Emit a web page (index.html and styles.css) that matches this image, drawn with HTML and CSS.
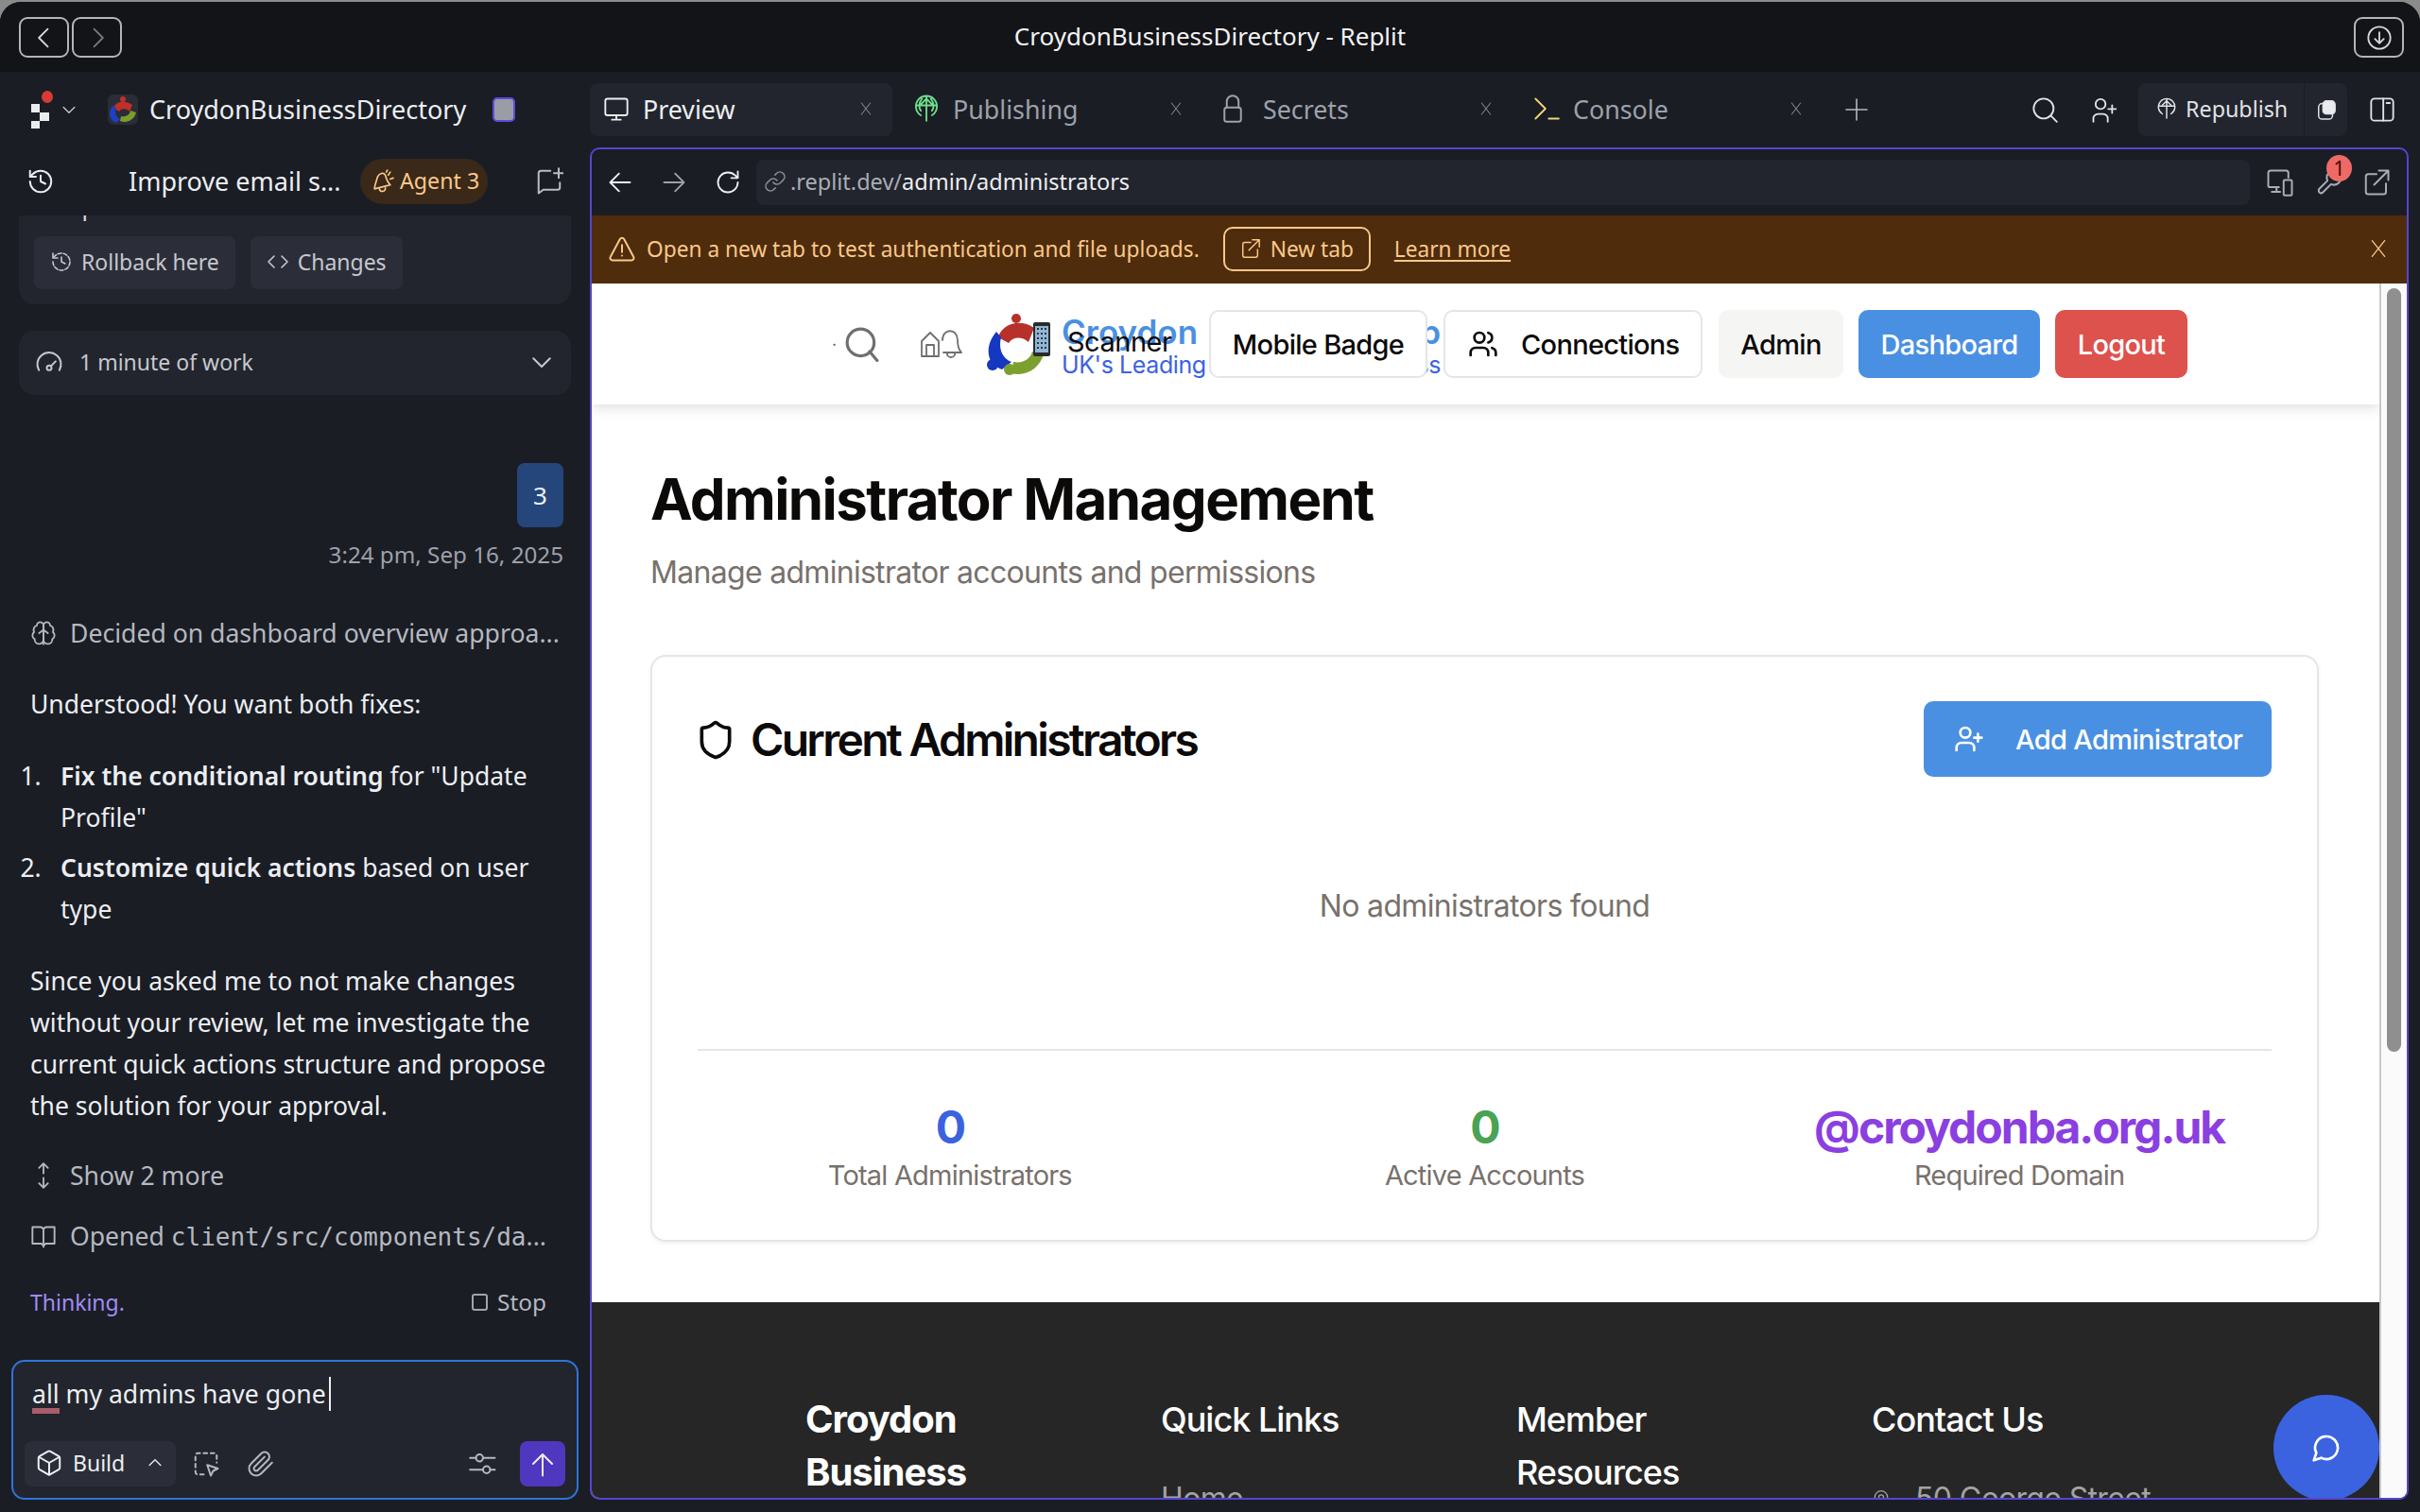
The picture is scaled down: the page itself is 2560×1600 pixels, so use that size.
FILE: index.html
```html
<!DOCTYPE html>
<html lang="en">
<head>
  <title>CroydonBusinessDirectory - Replit</title>
  <meta charset="utf-8">
  <link rel="stylesheet" href="styles.css">
</head>
<body>
<div class="window">

  <div class="titlebar">
    <div class="nav-btns">
      <div class="tb-btn"><svg class="ic-tb" viewBox="0 0 24 24"><path d="M15 4 7 12l8 8"/></svg></div>
      <div class="tb-btn dim"><svg class="ic-tb" viewBox="0 0 24 24"><path d="m9 4 8 8-8 8"/></svg></div>
    </div>
    <div class="win-title">CroydonBusinessDirectory - Replit</div>
    <div class="tb-btn"><svg class="ic-tb" viewBox="0 0 24 24"><circle cx="12" cy="12" r="10"/><path d="M12 7v10M8 13l4 4 4-4"/></svg></div>
  </div>

  <div class="workspace">

    <!-- left: agent chat -->
    <div class="left">
      <div class="project-bar">
        <div class="rep-logo">
          <span class="rep-dot"></span>
          <svg class="rep-mark" viewBox="0 0 20 30"><path d="M0 4h9v9H0zM9 13h10v9H9zM0 22h9v9H0z" fill="#e9ebef"/></svg>
        </div>
        <svg class="ic-sm chev" viewBox="0 0 24 24"><path d="m5 9 7 7 7-7"/></svg>
        <div class="proj-icon">
          <svg viewBox="0 0 32 32"><circle cx="16" cy="5" r="3" fill="#c03028"/><path d="M6 14c2-6 11-9 20-3l-3 7c-3-3-8-4-11 0z" fill="#c03028"/><path d="M5 12C0 19 1 27 9 30l4-4c-4-2-6-7-4-12z" fill="#1d3fc0"/><path d="M13 28c7 3 15-1 17-9l-6-2c-1 5-5 7-10 6z" fill="#7a9d2c"/></svg>
        </div>
        <div class="proj-name">CroydonBusinessDirectory</div>
        <div class="proj-chip"></div>
      </div>

      <div class="chat-head">
        <svg class="ic-md" viewBox="0 0 24 24"><path d="M3 12a9 9 0 1 0 9-9 9.75 9.75 0 0 0-6.74 2.74L3 8"/><path d="M3 3v5h5M12 7v5l4 2"/></svg>
        <div class="chat-title">Improve email s...</div>
        <div class="agent-pill">
          <svg class="ic-pill" viewBox="0 0 24 24"><path d="M7 8c2-4 6-5 8-2 1 4 3 8 5 10L4 20c0-3 2-8 3-12z"/><path d="M9 20a3 3 0 0 0 6-1M18 6l2-3M20 10l3-1M16 3l1-2"/></svg>
          Agent 3
        </div>
        <svg class="ic-md new-chat" viewBox="0 0 24 24"><path d="M13 3H5a2 2 0 0 0-2 2v17l4-3h12a2 2 0 0 0 2-2v-4"/><path d="M20 1v8M16 5h8"/></svg>
      </div>

      <div class="chat">
        <div class="checkpoint">
          <div class="cut-text">complete.</div>
          <div class="cp-btns">
            <div class="cp-btn"><svg class="ic-btn" viewBox="0 0 24 24"><path d="M3 12a9 9 0 1 0 9-9 9.75 9.75 0 0 0-6.74 2.74L3 8" stroke-dasharray="4 2"/><path d="M3 3v5h5M12 7v5l4 2"/></svg>Rollback here</div>
            <div class="cp-btn"><svg class="ic-btn" viewBox="0 0 24 24"><path d="m16 18 6-6-6-6M8 6l-6 6 6 6"/></svg>Changes</div>
          </div>
        </div>

        <div class="work-row">
          <svg class="ic-md" viewBox="0 0 24 24"><circle cx="12" cy="17" r="2"/><path d="m13.5 15.5 4-4M3.34 19a10 10 0 1 1 17.32 0"/></svg>
          <span class="work-text">1 minute of work</span>
          <svg class="ic-md work-chev" viewBox="0 0 24 24"><path d="m5 9 7 7 7-7"/></svg>
        </div>

        <div class="user-msg"><div class="bubble">3</div></div>
        <div class="msg-time">3:24 pm, Sep 16, 2025</div>

        <div class="step step-first">
          <svg class="ic-step" viewBox="0 0 24 24"><path d="M12 5a3 3 0 1 0-6 .1 4 4 0 0 0-2.5 5.8 4 4 0 0 0 .5 6.6A4 4 0 1 0 12 18Z"/><path d="M12 5a3 3 0 1 1 6 .1 4 4 0 0 1 2.500 5.800 4 4 0 0 1-.5 6.600A4 4 0 1 1 12 18Z"/><path d="M12 8v14M8 12l4-3 4 3"/></svg>
          <span>Decided on dashboard overview approa...</span>
        </div>

        <p class="msg msg-first">Understood! You want both fixes:</p>
        <ol class="msg-list">
          <li><b>Fix the conditional routing</b> for "Update Profile"</li>
          <li><b>Customize quick actions</b> based on user type</li>
        </ol>
        <p class="msg">Since you asked me to not make changes without your review, let me investigate the current quick actions structure and propose the solution for your approval.</p>

        <div class="step step-more">
          <svg class="ic-step" viewBox="0 0 24 24"><path d="M12 1v9M8 5l4-4 4 4M12 14v9M8 19l4 4 4-4"/></svg>
          <span>Show 2 more</span>
        </div>
        <div class="step step-open">
          <svg class="ic-step" viewBox="0 0 24 24"><path d="M12 4v17M2 3h7a3 3 0 0 1 3 3 3 3 0 0 1 3-3h7v15h-8l-2 2-2-2H2z"/></svg>
          <span>Opened <code>client/src/components/da</code>...</span>
        </div>

        <div class="status-row">
          <span class="thinking">Thinking.</span>
          <span class="stop"><span class="stop-box"></span>Stop</span>
        </div>
      </div>

      <div class="composer">
        <div class="composer-text"><span class="misspelt">all</span> my admins have gone<span class="caret"></span></div>
        <div class="composer-tools">
          <div class="build-btn">
            <svg class="ic-build" viewBox="0 0 24 24"><path d="M21 8a2 2 0 0 0-1-1.730l-7-4a2 2 0 0 0-2 0l-7 4A2 2 0 0 0 3 8v8a2 2 0 0 0 1 1.730l7 4a2 2 0 0 0 2 0l7-4A2 2 0 0 0 21 16Z"/><path d="m3.300 7 8.700 5 8.700-5M12 22V12"/></svg>
            <span>Build</span>
            <svg class="ic-sm build-chev" viewBox="0 0 24 24"><path d="m5 15 7-7 7 7"/></svg>
          </div>
          <svg class="ic-tool" viewBox="0 0 24 24"><path d="M10 21H5a2 2 0 0 1-2-2V5a2 2 0 0 1 2-2h14a2 2 0 0 1 2 2v6" stroke-dasharray="3 3"/><path d="m13 13 9 3-4 2-2 4z"/></svg>
          <svg class="ic-tool clip" viewBox="0 0 24 24"><path d="m21.440 11.050-9.190 9.190a6 6 0 0 1-8.490-8.490l8.570-8.570A4 4 0 1 1 18 8.840l-8.590 8.570a2 2 0 0 1-2.830-2.830l8.490-8.480"/></svg>
          <svg class="ic-tool tool-right" viewBox="0 0 24 24"><circle cx="9" cy="7" r="3"/><circle cx="15" cy="17" r="3"/><path d="M12 7h10M1 7h5M1 17h11M18 17h4"/></svg>
          <div class="send-btn"><svg class="ic-md" viewBox="0 0 24 24"><path d="m4 12 8-8 8 8M12 4v18"/></svg></div>
        </div>
      </div>
    </div>

    <!-- right: tabs and preview -->
    <div class="right">
      <div class="tabs">
        <div class="tab active">
          <svg class="ic-tab" viewBox="0 0 24 24"><rect x="2" y="3" width="20" height="15" rx="2"/><path d="M8 22h8M12 18v4"/></svg>
          <span class="tab-name">Preview</span>
          <svg class="ic-x" viewBox="0 0 24 24"><path d="m5 3 14 18M19 3 5 21"/></svg>
        </div>
        <div class="tab">
          <svg class="ic-tab green" viewBox="0 0 24 24"><path d="M7 18a9.500 9.500 0 1 1 10 0M12 1v22M7 8l5-5 5 5M3 9h18M8 3c-3 4-3 8-1 11M16 3c3 4 3 8 1 11"/></svg>
          <span class="tab-name">Publishing</span>
          <svg class="ic-x" viewBox="0 0 24 24"><path d="m5 3 14 18M19 3 5 21"/></svg>
        </div>
        <div class="tab">
          <svg class="ic-tab lock" viewBox="0 0 16 24"><rect x="1" y="11" width="14" height="12" rx="2"/><path d="M3 11V6a5 5 0 0 1 10 0v5"/></svg>
          <span class="tab-name">Secrets</span>
          <svg class="ic-x" viewBox="0 0 24 24"><path d="m5 3 14 18M19 3 5 21"/></svg>
        </div>
        <div class="tab">
          <svg class="ic-tab yellow" viewBox="0 0 24 24"><path d="m2 3 9 9-9 9"/><path class="under" d="M14 21h9"/></svg>
          <span class="tab-name">Console</span>
          <svg class="ic-x" viewBox="0 0 24 24"><path d="m5 3 14 18M19 3 5 21"/></svg>
        </div>
        <svg class="ic-plus" viewBox="0 0 24 24"><path d="M12 1v22M1 12h22"/></svg>
        <div class="tabs-right">
          <svg class="ic-head" viewBox="0 0 24 24"><circle cx="11" cy="11" r="9"/><path d="m23 23-5.500-5.500"/></svg>
          <svg class="ic-head" viewBox="0 0 24 24"><path d="M3 23v-4a5 5 0 0 1 5-3h3a5 5 0 0 1 5 3v4"/><circle cx="9.500" cy="7" r="4.500"/><path d="M20 8v7M16.500 11.500h7"/></svg>
          <div class="republish">
            <div class="rep-main">
              <svg class="ic-rep" viewBox="0 0 24 24"><path d="M7 18a9.500 9.500 0 1 1 10 0M12 1v22M7 8l5-5 5 5M3 9h18"/></svg>
              Republish
            </div>
            <div class="rep-side"><svg class="ic-rep-side" viewBox="0 0 24 24"><rect x="3" y="5" width="16" height="18" rx="4"/><rect x="8" y="2" width="14" height="15" rx="4" fill="#e9ebef"/></svg></div>
          </div>
          <svg class="ic-panel" viewBox="0 0 24 24"><rect x="2" y="2" width="20" height="20" rx="3"/><path d="M13 2v20M16 6h3"/></svg>
        </div>
      </div>

      <div class="preview">
        <div class="url-row">
          <svg class="ic-url" viewBox="0 0 24 24"><path d="M21 12H3M11 20l-8-8 8-8"/></svg>
          <svg class="ic-url fwd" viewBox="0 0 24 24"><path d="M3 12h18M13 4l8 8-8 8"/></svg>
          <svg class="ic-url" viewBox="0 0 24 24"><path d="M21 12a9 9 0 1 1-9-9c2.520 0 4.930 1 6.740 2.740L21 8M21 2v6h-6"/></svg>
          <div class="url-box">
            <svg class="ic-link" viewBox="0 0 24 24"><path d="M10 13a5 5 0 0 0 7.540.540l3-3a5 5 0 0 0-7.070-7.070l-1.720 1.710"/><path d="M14 11a5 5 0 0 0-7.540-.540l-3 3a5 5 0 0 0 7.070 7.070l1.710-1.710"/></svg>
            <span class="url-host">.replit.dev/</span><span class="url-path">admin/administrators</span>
          </div>
          <svg class="ic-url-r" viewBox="0 0 24 24"><path d="M11 16H3a1 1 0 0 1-1-1V4a2 2 0 0 1 2-2h13a2 2 0 0 1 2 2v4M9 16v4M5 20h7"/><rect x="15" y="10" width="7" height="13" rx="1"/></svg>
          <div class="devtools">
            <svg class="ic-url-r" viewBox="0 0 24 24"><path d="M14.700 6.300a1 1 0 0 0 0 1.400l1.600 1.600a1 1 0 0 0 1.400 0l3.770-3.770a6 6 0 0 1-7.940 7.940l-6.910 6.910a2.120 2.120 0 0 1-3-3l6.910-6.910a6 6 0 0 1 7.940-7.940z"/></svg>
            <span class="dev-badge">1</span>
          </div>
          <svg class="ic-url-r" viewBox="0 0 24 24"><path d="M14 2h8v8M10 14 22 2M20 13v7a2 2 0 0 1-2 2H5a2 2 0 0 1-2-2V7a2 2 0 0 1 2-2h7"/></svg>
        </div>

        <div class="banner">
          <svg class="ic-warn" viewBox="0 0 24 24"><path d="M21.730 19l-8-15a2 2 0 0 0-3.480 0l-8 15A2 2 0 0 0 4 22h16a2 2 0 0 0 1.730-3M12 9v6M12 18h.01"/></svg>
          <span class="banner-text">Open a new tab to test authentication and file uploads.</span>
          <div class="newtab-btn"><svg class="ic-newtab" viewBox="0 0 24 24"><path d="M14 2h8v8M10 14 22 2M20 13v7a2 2 0 0 1-2 2H5a2 2 0 0 1-2-2V7a2 2 0 0 1 2-2h7"/></svg>New tab</div>
          <span class="learn">Learn more</span>
          <svg class="ic-close" viewBox="0 0 24 24"><path d="m4 2 16 20M20 2 4 22"/></svg>
        </div>

        <div class="site">
          <div class="page">
            <div class="site-nav">
              <span class="nav-dot">·</span>
              <svg class="nav-search" viewBox="0 0 24 24"><circle cx="11" cy="11" r="9"/><path d="m22 23-5-6"/></svg>
              <svg class="nav-home" viewBox="0 0 44 30"><path d="M1 28V12l9-9 9 9v16zM6 28V16h8v12M23 11c0-13 16-13 16 0 0 7 2 11 4 13H24M28 24v2a4 3 0 0 0 8 0v-2"/></svg>
              <div class="brand">
                <svg class="brand-logo" viewBox="0 0 68 66"><circle cx="31" cy="6" r="5" fill="#b8302a"/><path d="M12 26c4-15 24-20 38-10l-6 15c-7-6-16-6-21 1z" fill="#b8302a"/><path d="M10 20C-2 34-2 54 16 60l10-8c-10-4-14-14-11-26z" fill="#1637c0"/><circle cx="6" cy="55" r="6" fill="#1637c0"/><path d="M26 64c16 4 30-6 34-20l-12-3c-2 8-10 13-20 11z" fill="#7ca02f"/><circle cx="24" cy="60" r="6" fill="#7ca02f"/></svg>
                <svg class="brand-phone" viewBox="0 0 18 36"><rect width="18" height="36" rx="2" fill="#2a2a2a"/><rect x="2" y="4" width="14" height="28" fill="#8fb6d8"/><path d="M4 6h2v2H4zM8 6h2v2H8zM12 6h2v2h-2zM4 11h2v2H4zM8 11h2v2H8zM12 11h2v2h-2zM4 16h2v2H4zM8 16h2v2H8zM12 16h2v2h-2zM4 21h2v2H4zM8 21h2v2H8zM12 21h2v2h-2zM4 26h2v2H4zM8 26h2v2H8zM12 26h2v2h-2z" fill="#333"/></svg>
                <div class="brand-text">
                  <div class="brand-line brand-top"><span>Croydon</span><span>Group</span></div>
                  <div class="brand-line brand-sub"><span>UK's Leading</span><span>Business</span></div>
                  <span class="scanner">Scanner</span>
                </div>
              </div>
              <div class="nav-btn outline first">Mobile Badge</div>
              <div class="nav-btn outline conn">
                <svg class="ic-users" viewBox="0 0 24 24"><path d="M16 21v-2a4 4 0 0 0-4-4H6a4 4 0 0 0-4 4v2"/><circle cx="9" cy="7" r="4"/><path d="M22 21v-2a4 4 0 0 0-3-3.870M16 3.130a4 4 0 0 1 0 7.750"/></svg>
                Connections
              </div>
              <div class="nav-btn grey">Admin</div>
              <div class="nav-btn blue">Dashboard</div>
              <div class="nav-btn red">Logout</div>
            </div>

            <div class="content">
              <h1>Administrator Management</h1>
              <p class="lead">Manage administrator accounts and permissions</p>

              <div class="card">
                <div class="card-head">
                  <div class="card-title">
                    <svg class="ic-shield" viewBox="0 0 24 24"><path d="M20 13c0 5-3.500 7.500-7.660 8.950a1 1 0 0 1-.67-.01C7.500 20.500 4 18 4 13V6a1 1 0 0 1 1-1c2 0 4.500-1.200 6.240-2.720a1.170 1.170 0 0 1 1.520 0C14.510 3.810 17 5 19 5a1 1 0 0 1 1 1z"/></svg>
                    <h2>Current Administrators</h2>
                  </div>
                  <div class="add-btn">
                    <svg class="ic-add" viewBox="0 0 24 24"><path d="M16 21v-2a4 4 0 0 0-4-4H6a4 4 0 0 0-4 4v2"/><circle cx="9" cy="7" r="4"/><path d="M19 8v6M22 11h-6"/></svg>
                    Add Administrator
                  </div>
                </div>
                <div class="empty">No administrators found</div>
                <div class="stats">
                  <div class="stat"><div class="stat-num c-blue">0</div><div class="stat-label">Total Administrators</div></div>
                  <div class="stat"><div class="stat-num c-green">0</div><div class="stat-label">Active Accounts</div></div>
                  <div class="stat"><div class="stat-num c-purple">@croydonba.org.uk</div><div class="stat-label">Required Domain</div></div>
                </div>
              </div>
            </div>

            <div class="footer">
              <div class="foot-col"><div class="foot-brand">Croydon Business</div></div>
              <div class="foot-col"><div class="foot-head">Quick Links</div><div class="foot-link">Home</div></div>
              <div class="foot-col"><div class="foot-head">Member Resources</div></div>
              <div class="foot-col">
                <div class="foot-head">Contact Us</div>
                <div class="foot-link foot-addr"><svg class="ic-pin" viewBox="0 0 24 24"><path d="M20 10c0 6-8 12-8 12s-8-6-8-12a8 8 0 0 1 16 0z"/><circle cx="12" cy="10" r="3"/></svg>50 George Street</div>
              </div>
            </div>
          </div>
          <div class="scrollbar"><div class="thumb"></div></div>
          <div class="chat-fab"><svg class="ic-fab" viewBox="0 0 24 24"><path d="M7.900 20A9 9 0 1 0 4 16.100L2 22Z"/></svg></div>
        </div>
      </div>
    </div>
  </div>
</div>
</body>
</html>
```

FILE: styles.css
```css
* { box-sizing: border-box; }

body {
  margin: 0;
  width: 2560px;
  height: 1600px;
  overflow: hidden;
  background: #8b8b8b;
  font-family: "Noto Sans", sans-serif;
  color: #e9ebef;
}

svg { fill: none; stroke: currentColor; stroke-width: 1.6; stroke-linecap: round; stroke-linejoin: round; flex: none; }

.window {
  margin-top: 2px;
  height: 1598px;
  border-radius: 22px 22px 0 0;
  overflow: hidden;
  background: #1a1d24;
  display: flex;
  flex-direction: column;
}

/* title bar */
.titlebar {
  height: 74px;
  background: #131418;
  display: flex;
  align-items: center;
  justify-content: space-between;
  padding: 0 17px 0 20px;
  position: relative;
}
.nav-btns { display: flex; gap: 3px; }
.tb-btn {
  width: 53px;
  height: 43px;
  border: 2px solid #b4b5b8;
  border-radius: 9px;
  display: flex;
  align-items: center;
  justify-content: center;
  margin-top: 1px;
  color: #d6d7da;
}
.tb-btn.dim { color: #77787c; }
.ic-tb { width: 28px; height: 28px; }
.win-title {
  position: absolute;
  left: 0;
  right: 0;
  top: 18px;
  text-align: center;
  font-size: 26px;
  color: #f2f2f3;
}

.workspace { flex: 1; display: flex; min-height: 0; }

/* left column */
.left { width: 624px; flex: none; display: flex; flex-direction: column; }

.project-bar { height: 80px; display: flex; align-items: center; padding-left: 33px; }
.rep-logo { position: relative; width: 22px; height: 36px; margin-top: 2px; }
.rep-mark { width: 20px; height: 30px; stroke: none; position: absolute; top: 7px; left: 0; }
.rep-dot { position: absolute; top: -3px; left: 11px; width: 12px; height: 13px; background: #d93a36; border-radius: 50%; }
.ic-sm { width: 20px; height: 20px; }
.chev { margin-left: 8px; color: #c8cad0; }
.proj-icon { width: 32px; height: 32px; margin-left: 31px; background: #2a2d35; border-radius: 6px; overflow: hidden; }
.proj-icon svg { width: 32px; height: 32px; stroke: none; }
.proj-name { margin-left: 12px; font-size: 27px; color: #eceef2; padding-bottom: 2px; }
.proj-chip { width: 24px; height: 26px; margin-left: 28px; background: #9a9da6; border: 2px solid #5c4be0; border-radius: 5px; }

.chat-head { height: 72px; display: flex; align-items: center; padding-left: 28px; position: relative; }
.ic-md { width: 30px; height: 30px; }
.chat-title { margin-left: 78px; font-size: 27px; color: #eceef2; width: 245px; padding-bottom: 2px; white-space: nowrap; }
.agent-pill {
  width: 135px;
  height: 48px;
  border-radius: 24px;
  background: #3a2818;
  color: #f8c88a;
  font-size: 23.2px;
  display: flex;
  align-items: center;
  gap: 6px;
  padding: 0 0 2px 11px;
}
.ic-pill { width: 25px; height: 25px; }
.new-chat { margin-left: 50px; color: #b9bcc4; }

.chat { flex: 1; min-height: 0; overflow: hidden; padding: 0 20px; }
.checkpoint {
  height: 94px;
  background: #22252d;
  border-radius: 0 0 16px 16px;
  padding: 0 16px;
  overflow: hidden;
}
.cut-text { height: 22px; margin-top: -21px; font-size: 25px; line-height: 22px; color: #d8dae0; }
.cp-btns { display: flex; gap: 16px; margin-top: 21px; }
.cp-btn {
  height: 56px;
  padding: 0 17px 2px;
  background: #2b2e38;
  border-radius: 8px;
  display: flex;
  align-items: center;
  gap: 9px;
  font-size: 23px;
  color: #c5c8cf;
}
.ic-btn { width: 24px; height: 24px; }

.work-row {
  height: 68px;
  margin-top: 28px;
  background: #22252d;
  border-radius: 16px;
  display: flex;
  align-items: center;
  padding: 0 16px 2px 17px;
  color: #c5c8cf;
  font-size: 23px;
}
.work-text { margin-left: 17px; }
.work-chev { margin-left: auto; }

.user-msg { display: flex; justify-content: flex-end; margin-top: 72px; padding-right: 8px; }
.bubble {
  width: 49px;
  height: 68px;
  background: #25467a;
  border-radius: 8px;
  display: flex;
  align-items: center;
  justify-content: center;
  font-size: 26px;
  color: #f0f2f6;
}
.msg-time { text-align: right; padding-right: 8px; margin-top: 12px; font-size: 24.2px; line-height: 34px; color: #9da1aa; }

.step { display: flex; align-items: center; gap: 14px; padding-left: 12px; font-size: 26.6px; line-height: 40px; color: #b4b8c0; white-space: nowrap; }
.ic-step { width: 28px; height: 30px; color: #b4b8c0; }
.step-first { margin-top: 46px; }
.step-more { margin-top: 32px; }
.step-open { margin-top: 24px; }
.step code { font-family: "DejaVu Sans Mono", monospace; font-size: 26px; }

.msg { margin: 0; padding-left: 12px; font-size: 26.5px; line-height: 44px; color: #eceef2; }
.msg-first { margin-top: 33px; }
.msg-list { margin: 32px 0 32px; padding: 0 0 0 44px; font-size: 26.5px; line-height: 44px; color: #eceef2; }
.msg-list li { margin-bottom: 9px; }
.msg-list li::marker { content: counter(list-item) ".\2002\2006\200A"; }
.msg-list b { font-weight: 600; }

.status-row { display: flex; justify-content: space-between; padding: 0 26px 0 12px; margin-top: 32px; font-size: 23px; line-height: 34px; }
.thinking { color: #a08cf5; }
.stop { color: #b4b8c0; display: flex; align-items: center; gap: 10px; font-size: 24.4px; }
.stop-box { width: 17px; height: 18px; border: 2px solid #a0a4ac; border-radius: 3px; }

.composer {
  height: 148px;
  margin: 0 12px 13px;
  background: #22252d;
  border: 2px solid #2f74d8;
  border-radius: 14px;
  padding: 0 12px;
}
.composer-text { height: 60px; padding: 15px 0 0 8px; font-size: 26.6px; line-height: 38px; color: #eceef2; white-space: nowrap; }
.misspelt { border-bottom: 6px solid #a85e6a; display: inline-block; line-height: 30px; }
.caret { display: inline-block; width: 2px; height: 36px; background: #eceef2; margin-left: 3px; vertical-align: -8px; }
.composer-tools { display: flex; align-items: center; margin-top: 24px; }
.build-btn {
  width: 160px;
  height: 48px;
  background: #2b2e38;
  border-radius: 8px;
  display: flex;
  align-items: center;
  padding: 0 0 2px 11px;
  font-size: 23px;
  color: #eceef2;
}
.ic-build { width: 30px; height: 34px; }
.build-btn span { margin-left: 10px; }
.build-chev { margin-left: auto; margin-right: 12px; }
.ic-tool { width: 30px; height: 34px; color: #b4b8c0; margin-left: 17px; }
.clip { margin-left: 28px; }
.tool-right { margin-left: auto; margin-right: 24px; }
.send-btn {
  width: 48px;
  height: 48px;
  background: #4f37c0;
  border-radius: 8px;
  display: flex;
  align-items: center;
  justify-content: center;
  color: #eceef2;
}

/* right column */
.right { flex: 1; min-width: 0; display: flex; flex-direction: column; padding-right: 12px; padding-bottom: 13px; }

.tabs { height: 80px; display: flex; align-items: center; gap: 8px; flex: none; }
.tab {
  width: 320px;
  height: 56px;
  display: flex;
  align-items: center;
  padding: 0 20px 2px 14px;
  border-radius: 8px;
  color: #9da1aa;
  font-size: 26.8px;
}
.tab.active { background: #22252d; color: #eceef2; }
.ic-tab { width: 28px; height: 30px; }
.lock { width: 20px; height: 30px; margin-right: 8px; }
.tab-name { margin-left: 14px; }
.green { color: #6fdc8c; }
.yellow { color: #f2d675; }
.under { color: #f2d675; }
.ic-x { width: 16px; height: 18px; margin-left: auto; color: #7f838c; }
.ic-plus { width: 24px; height: 24px; color: #b4b8c0; margin-left: 16px; }
.tabs-right { margin-left: auto; display: flex; align-items: center; color: #e0e2e7; }
.ic-head { width: 28px; height: 28px; margin-right: 34px; }
.republish {
  width: 221px;
  height: 56px;
  margin-left: -11px;
  background: #22252d;
  border-radius: 8px;
  display: flex;
}
.rep-main {
  width: 176px;
  display: flex;
  align-items: center;
  gap: 9px;
  padding: 0 0 2px 19px;
  font-size: 23.3px;
  border-right: 1px solid #1a1d24;
}
.ic-rep { width: 22px; height: 28px; }
.rep-side { flex: 1; display: flex; align-items: center; justify-content: center; }
.ic-rep-side { width: 22px; height: 24px; }
.ic-panel { width: 28px; height: 28px; margin-left: 23px; margin-right: 14px; }

.preview {
  flex: 1;
  min-height: 0;
  border: 2px solid #5645cf;
  border-radius: 10px;
  overflow: hidden;
  display: flex;
  flex-direction: column;
}
.url-row { height: 70px; flex: none; display: flex; align-items: center; padding: 0 12px 0 16px; color: #eceef2; }
.ic-url { width: 28px; height: 28px; margin-right: 29px; }
.ic-url:nth-of-type(3) { margin-right: 0; }
.fwd { color: #9da1aa; }
.url-box {
  width: 1580px;
  height: 48px;
  margin-left: 16px;
  margin-right: 17px;
  background: #22252d;
  border-radius: 8px;
  display: flex;
  align-items: center;
  padding: 0 0 2px 8px;
  font-size: 23.5px;
}
.ic-link { width: 24px; height: 24px; color: #8b8f98; margin-right: 4px; }
.url-host { color: #a9adb5; }
.url-path { color: #eceef2; }
.ic-url-r { width: 30px; height: 30px; color: #a9adb5; }
.devtools { position: relative; margin: 0 22px; width: 28px; height: 30px; }
.dev-badge {
  position: absolute;
  top: -14px;
  left: 12px;
  width: 27px;
  height: 28px;
  border-radius: 50%;
  background: #ee6a66;
  color: #4a0808;
  font-size: 21px;
  line-height: 28px;
  text-align: center;
}

.banner { height: 72px; flex: none; background: #4f2c0c; color: #f8c88a; display: flex; align-items: center; padding: 0 0 2px 16px; font-size: 22.7px; }
.ic-warn { width: 32px; height: 30px; }
.banner-text { margin-left: 10px; }
.newtab-btn {
  height: 47px;
  width: 156px;
  margin-left: 25px;
  border: 2px solid #f8c88a;
  border-radius: 10px;
  display: flex;
  align-items: center;
  justify-content: center;
  gap: 10px;
}
.ic-newtab { width: 22px; height: 24px; }
.learn { margin-left: 25px; text-decoration: underline; text-underline-offset: 3px; }
.ic-close { width: 20px; height: 20px; margin-left: auto; margin-right: 20px; }

/* the site inside the preview */
.site { flex: 1; min-height: 0; display: flex; background: #fff; position: relative; font-family: Inter, sans-serif; }
.page { flex: 1; min-width: 0; overflow: hidden; }
.scrollbar { width: 29px; flex: none; background: #fafafa; border-left: 2px solid #c8c8c8; padding: 5px 6px 0 6px; }
.thumb { height: 808px; background: #8f8f8f; border-radius: 8px; }

.site-nav {
  height: 128px;
  background: #fff;
  display: flex;
  align-items: center;
  padding-left: 254px;
  box-shadow: 0 4px 12px rgba(0, 0, 0, 0.12);
  position: relative;
}
.nav-dot { color: #666; font-size: 18px; width: 12px; }
.nav-search { width: 38px; height: 38px; color: #6f6f6f; margin-left: 1px; stroke-width: 2; }
.nav-home { width: 44px; height: 30px; margin-left: 43px; color: #6f6f6f; stroke-width: 1.8; }
.brand { display: flex; align-items: center; margin-left: 26px; position: relative; }
.brand-logo { width: 68px; height: 66px; stroke: none; }
.brand-phone { position: absolute; left: 49px; top: 15px; width: 18px; height: 36px; stroke: none; }
.brand-text { width: 401px; margin-left: 11px; position: relative; padding-top: 6px; }
.brand-line { display: flex; justify-content: space-between; white-space: nowrap; }
.brand-top { font-size: 35px; font-weight: 600; line-height: 38px; color: #4a90e2; }
.brand-sub { font-size: 25px; line-height: 32px; color: #3b63e0; letter-spacing: -0.4px; }
.scanner { position: absolute; left: 6px; top: 19px; font-size: 29px; line-height: 34px; color: #0a0a0a; letter-spacing: -0.5px; }

.nav-btn {
  height: 72px;
  display: flex;
  align-items: center;
  border-radius: 10px;
  font-size: 29px;
  font-weight: 500;
  letter-spacing: -0.7px;
  padding: 0 24px;
  white-space: nowrap;
  position: relative;
  color: #0c0a09;
}
.outline { background: #fff; border: 2px solid #e5e5e5; }
.first { margin-left: -245px; width: 231px; justify-content: center; }
.conn { margin-left: 17px; width: 274px; gap: 24px; }
.grey { background: #f5f5f4; margin-left: 17px; width: 132px; justify-content: center; }
.blue { background: #4a90e2; color: #fff; margin-left: 16px; width: 192px; justify-content: center; }
.red { background: #dd524d; color: #fff; margin-left: 16px; width: 140px; justify-content: center; }
.ic-users { width: 32px; height: 32px; color: #0c0a09; stroke-width: 2; }

.content { padding: 63px 64px 64px 62px; }
h1 { margin: 0; font-size: 60px; line-height: 74px; font-weight: 700; color: #0c0a09; letter-spacing: -1.6px; }
.lead { margin: 19px 0 0; font-size: 32px; line-height: 44px; color: #78716c; letter-spacing: -0.7px; }

.card {
  margin-top: 65px;
  height: 621px;
  border: 2px solid #e5e5e5;
  border-radius: 16px;
  box-shadow: 0 2px 4px rgba(0, 0, 0, 0.06);
  padding: 47px 48px 0 48px;
}
.card-head { display: flex; justify-content: space-between; align-items: center; height: 80px; }
.card-title { display: flex; align-items: center; gap: 15px; padding-top: 2px; }
.ic-shield { width: 44px; height: 44px; margin-left: -3px; color: #0c0a09; stroke-width: 2; }
h2 { margin: 0; font-size: 48px; font-weight: 600; line-height: 60px; color: #0c0a09; letter-spacing: -2.7px; }
.add-btn {
  width: 368px;
  height: 80px;
  background: #4a90e2;
  border-radius: 10px;
  color: #fff;
  font-size: 29px;
  font-weight: 500;
  letter-spacing: -0.65px;
  display: flex;
  align-items: center;
  padding-left: 32px;
  gap: 33px;
}
.ic-add { width: 32px; height: 32px; stroke-width: 2; }
.empty { margin-top: 115px; text-align: center; font-size: 32px; line-height: 44px; color: #78716c; height: 173px; letter-spacing: -0.65px; }
.stats {
  border-top: 2px solid #e5e5e5;
  padding-top: 49px;
  display: grid;
  grid-template-columns: repeat(3, 1fr);
  column-gap: 32px;
  text-align: center;
}
.stat-num { font-size: 48px; line-height: 64px; font-weight: 700; letter-spacing: -2px; white-space: nowrap; }
.stat-label { font-size: 29px; line-height: 40px; color: #78716c; margin-top: -1px; letter-spacing: -0.8px; }
.c-blue { color: #3b63e0; }
.c-green { color: #4aa254; }
.c-purple { color: #8b3fe0; }

.footer {
  background: #262626;
  display: grid;
  grid-template-columns: repeat(4, 376px);
  padding: 96px 0 0 226px;
  height: 400px;
  color: #fff;
}
.foot-brand { font-size: 40px; font-weight: 700; line-height: 56px; width: 260px; letter-spacing: -1px; }
.foot-head { font-size: 36px; font-weight: 500; line-height: 56px; width: 260px; letter-spacing: -1px; }
.foot-link { margin-top: 34px; font-size: 32px; line-height: 44px; color: #a3a3a3; letter-spacing: -0.65px; }
.foot-addr { display: flex; align-items: center; gap: 26px; }
.ic-pin { width: 20px; height: 24px; }

.chat-fab {
  position: absolute;
  right: 29px;
  bottom: -3px;
  width: 112px;
  height: 112px;
  border-radius: 50%;
  background: #3b63e0;
  display: flex;
  align-items: center;
  justify-content: center;
  color: #fff;
}
.ic-fab { width: 32px; height: 32px; stroke-width: 2; }
```
